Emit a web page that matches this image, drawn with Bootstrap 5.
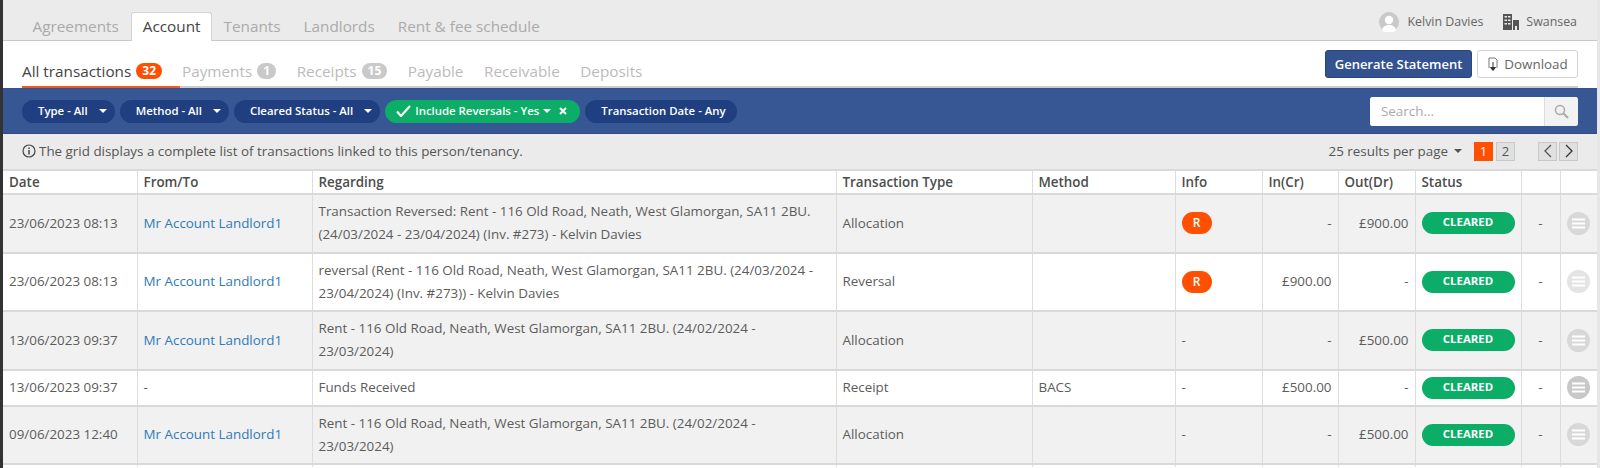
<!DOCTYPE html>
<html lang="en">
<head>
    <title>Account</title>
    <meta charset="UTF-8">
    <link href="https://cdn.jsdelivr.net/npm/bootstrap@5.3.0/dist/css/bootstrap.min.css" rel="stylesheet">
    <style>
        html, body { height: 468px; overflow: hidden; }
        body { font-family: "Open Sans", sans-serif; font-size: 13.4px; color: #555; background: #fff; border-left: 3px solid #333; border-right: 3px solid #e6e6e6; }
        .top-bar { height: 41px; background: #ebebeb; border-bottom: 1px solid #c9c9c9; padding-left: 17px; padding-right: 20px; }
        .top-tab { display: block; height: 28px; padding: 0 11.5px; font-size: 15.3px; line-height: 27px; color: #aaa; text-decoration: none; border-top: 1px solid transparent; }
        .top-tab.first-tab { padding: 0 12.5px; }
        .top-tab.active-tab { background: #fff; color: #444; border: 1px solid #d4d4d4; border-bottom: 0; border-radius: 3px 3px 0 0; height: 29px; margin-bottom: -1px; padding: 0 10.5px; }
        .user-info { font-size: 12.4px; color: #666; }
        .user-sep { margin-left: 20px; margin-right: 7px; }
        .sub-bar { height: 47px; padding: 0 19px; }
        .sub-tabs { height: 47px; border-bottom: 2px solid #ccc; flex: 1; }
        .sub-tab { color: #bbb; font-size: 15.3px; text-decoration: none; height: 47px; padding-top: 20px; margin-right: 20.5px; display: flex; gap: 5px; line-height: 20px; }
        .sub-tab.active-sub { color: #444; border-bottom: 2px solid #f15a22; padding-right: 18px; margin-right: 2px; }
        .count-pill { min-width: 18px; height: 16px; margin-top: 2px; padding: 0 6px; border-radius: 9px; background: #c9c9c9; color: #fff; font-size: 12px; font-weight: 700; line-height: 16px; text-align: center; }
        .count-pill.hot { background: #ff4f00; }
        .actions-wrap { gap: 5px; margin-top: 9px; height: 28px; }
        .btn-generate { background: #34528f; border: 1px solid #2b4679; color: #fff; font-size: 13px; font-weight: 600; height: 28px; width: 147px; padding: 0; line-height: 25px; border-radius: 3px; }
        .btn-download { background: #fff; border: 1px solid #d4d4d4; color: #666; font-size: 13.4px; height: 28px; width: 101px; padding: 0; line-height: 25px; border-radius: 3px; display: flex; align-items: center; justify-content: center; gap: 5px; }
        .filter-bar { height: 46px; background: #365694; border-top: 1px solid #34528f; padding: 0 19px; border-bottom: 1px solid #2f4b80; }
        .filter-pills { gap: 5px; }
        .filter-pill { height: 23px; border-radius: 12px; background: #1f3f80; color: #fff; font-size: 11.4px; font-weight: 600; padding: 0 8px 0 16px; line-height: 22px; white-space: nowrap; display: flex; align-items: center; gap: 11px; border: 0; }
        .filter-pill.plain { padding-right: 11px; }
        .filter-pill.on { background: #0bad67; padding: 0 13px 0 11px; gap: 4px; }
        .caret-down { width: 0; height: 0; border-left: 4px solid transparent; border-right: 4px solid transparent; border-top: 4px solid #fff; }
        .caret-down.caret-dark { border-top-color: #555; margin: 0 12px 0 6px; }
        .search-box { width: 208px; height: 29px; border-radius: 3px; overflow: hidden; background: #fff; }
        .search-box input { flex: 1; min-width: 0; border: 0; font-size: 13.4px; padding: 0 11px; outline: 0; color: #555; }
        .search-box input::placeholder { color: #aaa; }
        .search-btn { width: 34px; background: #f2f2f2; border-left: 1px solid #ddd; display: flex; align-items: center; justify-content: center; }
        .info-bar { height: 35px; background: #ebebeb; padding: 0 19px; color: #555; }
        .info-note { gap: 3px; }
        .page-box { width: 19px; height: 19px; line-height: 17px; text-align: center; font-size: 13px; background: #e0e0e0; border: 1px solid #c8c8c8; color: #555; display: flex; align-items: center; justify-content: center; }
        .page-box.current { background: #ff4f00; border-color: #ff4f00; color: #fff; }
        .page-two { margin-left: 3px; margin-right: 23px; }
        .page-prev { margin-right: 2px; }
        .grid-table { table-layout: fixed; width: 1594px; margin: 0; font-size: 13.4px; color: #5c5c5c; border-top: 2px solid #d9d9d9; }
        .grid-table th { height: 24px; padding: 0 0 0 6px; font-weight: 600; color: #4d4d4d; border-right: 1px solid #ddd; border-bottom: 2px solid #d9d9d9; vertical-align: middle; }
        .grid-table td { padding: 0 6px; line-height: 23px; vertical-align: middle; border-right: 1px solid #ddd; border-bottom: 2px solid #d9d9d9; color: #5c5c5c; }
        .grid-table tr.tall td { height: 58.5px; }
        .grid-table tr.short td { height: 36px; }
        .grid-table tr.tail td { height: 3px; line-height: 0; border-bottom: 0; }
        .grid-table tbody tr:nth-child(odd) td { background: #f1f1f1; }
        .grid-table tbody tr.tail td { background: #fff; }
        .grid-table td.regarding { padding-right: 16px; }
        .grid-table a { color: #2f7ab8; text-decoration: none; }
        .grid-table th:last-child, .grid-table td:last-child { border-right: 0; }
        .c-date { width: 134px; } .c-from { width: 175px; } .c-reg { width: 524px; } .c-type { width: 196px; }
        .c-method { width: 143px; } .c-info { width: 87px; } .c-in { width: 76px; } .c-out { width: 77px; }
        .c-status { width: 106px; } .c-dash { width: 39px; } .c-menu { width: 37px; }
        .r-chip { display: block; width: 30px; height: 22px; border-radius: 11px; background: #ff4f00; color: #fff; font-size: 12px; font-weight: 600; line-height: 21px; text-align: center; }
        .status-chip { display: block; width: 93px; height: 22px; border-radius: 11px; background: #0bad67; color: #fff; font-size: 11.4px; font-weight: 700; line-height: 20px; text-align: center; }
        .menu-dot { display: flex; width: 23px; height: 23px; border-radius: 50%; background: #d8d8d8; align-items: center; justify-content: center; }
        .dot-pale .menu-dot { background: #e4e4e4; }
        .dot-dark .menu-dot { background: #c8c8c8; }
    </style>
</head>
<body>
<div class="top-bar d-flex align-items-end justify-content-between">
    <div class="d-flex">
        <a class="top-tab first-tab" href="#">Agreements</a>
        <a class="top-tab active-tab" href="#">Account</a>
        <a class="top-tab" href="#">Tenants</a>
        <a class="top-tab" href="#">Landlords</a>
        <a class="top-tab" href="#">Rent &amp; fee schedule</a>
    </div>
    <div class="user-info d-flex align-items-center align-self-center mt-1">
        <svg width="20" height="20" viewBox="0 0 20 20" class="me-2"><circle cx="10" cy="10" r="10" fill="#c9c9c9"/><circle cx="10" cy="8" r="4.2" fill="#fff"/><path d="M3 18c1-4 4-5 7-5s6 1 7 5a10 10 0 0 1-14 0z" fill="#fff"/></svg>
        <span>Kelvin Davies</span>
        <svg width="16" height="16" viewBox="0 0 16 16" class="user-sep"><path d="M0 0h9v16H0zM10 6h6v10h-2v-4h-2v4h-2z" fill="#555"/><path d="M1.500 2h2.500v1.500H1.500zM5 2h2.500v1.500H5zM1.500 5.500h2.500V7H1.500zM5 5.500h2.500V7H5zM1.500 9h2.500v1.500H1.500zM5 9h2.500v1.500H5z" fill="#ebebeb"/></svg>
        <span>Swansea</span>
    </div>
</div>
<div class="sub-bar d-flex">
    <div class="sub-tabs d-flex">
        <a class="sub-tab active-sub" href="#">All transactions <span class="count-pill hot">32</span></a>
        <a class="sub-tab" href="#">Payments <span class="count-pill">1</span></a>
        <a class="sub-tab" href="#">Receipts <span class="count-pill">15</span></a>
        <a class="sub-tab" href="#">Payable</a>
        <a class="sub-tab" href="#">Receivable</a>
        <a class="sub-tab" href="#">Deposits</a>
        <div class="actions-wrap d-flex ms-auto">
            <button class="btn-generate" type="button">Generate Statement</button>
            <button class="btn-download" type="button">
                <svg width="12" height="15" viewBox="0 0 12 15"><path d="M2 11V1h6l2 2v8" fill="none" stroke="#777"/><path d="M6 5v8M3.500 10.500 6 13.500l2.500-3z" fill="#333" stroke="#333"/></svg>
                Download
            </button>
        </div>
    </div>
</div>
<div class="filter-bar d-flex align-items-center justify-content-between">
    <div class="filter-pills d-flex">
        <button class="filter-pill" type="button">Type - All <span class="caret-down"></span></button>
        <button class="filter-pill" type="button">Method - All <span class="caret-down"></span></button>
        <button class="filter-pill" type="button">Cleared Status - All <span class="caret-down"></span></button>
        <button class="filter-pill on" type="button">
            <svg width="15" height="12" viewBox="0 0 15 12"><path d="M1 6.500l4 4.500L14 1" fill="none" stroke="#fff" stroke-width="2.200"/></svg>
            Include Reversals - Yes <span class="caret-down"></span>
            <svg width="8" height="8" viewBox="0 0 8 8" class="ms-1"><path d="M1 1l6 6M7 1 1 7" stroke="#fff" stroke-width="2"/></svg>
        </button>
        <button class="filter-pill plain" type="button">Transaction Date - Any</button>
    </div>
    <div class="search-box d-flex">
        <input type="text" placeholder="Search...">
        <span class="search-btn">
            <svg width="15" height="15" viewBox="0 0 15 15"><circle cx="6" cy="6" r="4.500" fill="none" stroke="#aaa" stroke-width="1.500"/><path d="M9.500 9.500 14 14" stroke="#aaa" stroke-width="2"/></svg>
        </span>
    </div>
</div>
<div class="info-bar d-flex align-items-center justify-content-between">
    <div class="info-note d-flex align-items-center">
        <svg width="14" height="14" viewBox="0 0 14 14"><circle cx="7" cy="7" r="6" fill="none" stroke="#444" stroke-width="1.200"/><path d="M7 6v4.500M7 3.500v1.500" stroke="#444" stroke-width="1.500"/></svg>
        <span>The grid displays a complete list of transactions linked to this person/tenancy.</span>
    </div>
    <div class="d-flex align-items-center">
        <span>25 results per page</span>
        <span class="caret-down caret-dark"></span>
        <span class="page-box current">1</span>
        <span class="page-box page-two">2</span>
        <span class="page-box page-prev"><svg width="10" height="14" viewBox="0 0 10 14"><path d="M8 1 2 7l6 6" fill="none" stroke="#555" stroke-width="1.300"/></svg></span>
        <span class="page-box"><svg width="10" height="14" viewBox="0 0 10 14"><path d="m2 1 6 6-6 6" fill="none" stroke="#333" stroke-width="1.300"/></svg></span>
    </div>
</div>
<table class="grid-table">
    <colgroup>
        <col class="c-date"><col class="c-from"><col class="c-reg"><col class="c-type"><col class="c-method"><col class="c-info"><col class="c-in"><col class="c-out"><col class="c-status"><col class="c-dash"><col class="c-menu">
    </colgroup>
    <thead>
    <tr><th>Date</th><th>From/To</th><th>Regarding</th><th>Transaction Type</th><th>Method</th><th>Info</th><th>In(Cr)</th><th>Out(Dr)</th><th>Status</th><th></th><th></th></tr>
    </thead>
    <tbody id="rows"></tbody>
</table>
<script>
    const menuIcon = '<span class="menu-dot"><svg width="13" height="11" viewBox="0 0 13 11"><path d="M0 1.500h13M0 5.500h13M0 9.500h13" stroke="#fff" stroke-width="1.800"/></svg></span>';
    const rows = [
        ['tall', '23/06/2023 08:13', 1, 'Transaction Reversed: Rent - 116 Old Road, Neath, West Glamorgan, SA11 2BU. (24/03/2024 - 23/04/2024) (Inv. #273) - Kelvin Davies', 'Allocation', '', 1, '-', '£900.00', ''],
        ['tall', '23/06/2023 08:13', 1, 'reversal (Rent - 116 Old Road, Neath, West Glamorgan, SA11 2BU. (24/03/2024 - 23/04/2024) (Inv. #273)) - Kelvin Davies', 'Reversal', '', 1, '£900.00', '-', 'dot-pale'],
        ['tall', '13/06/2023 09:37', 1, 'Rent - 116 Old Road, Neath, West Glamorgan, SA11 2BU. (24/02/2024 - 23/03/2024)', 'Allocation', '', 0, '-', '£500.00', ''],
        ['short', '13/06/2023 09:37', 0, 'Funds Received', 'Receipt', 'BACS', 0, '£500.00', '-', 'dot-dark'],
        ['tall', '09/06/2023 12:40', 1, 'Rent - 116 Old Road, Neath, West Glamorgan, SA11 2BU. (24/02/2024 - 23/03/2024)', 'Allocation', '', 0, '-', '£500.00', '']
    ];
    document.getElementById('rows').innerHTML = rows.map(r => `
        <tr class="${r[0]} ${r[9]}">
            <td>${r[1]}</td>
            <td>${r[2] ? '<a href="#">Mr Account Landlord1</a>' : '-'}</td>
            <td class="regarding">${r[3]}</td>
            <td>${r[4]}</td>
            <td>${r[5]}</td>
            <td>${r[6] ? '<span class="r-chip">R</span>' : '-'}</td>
            <td class="text-end">${r[7]}</td>
            <td class="text-end">${r[8]}</td>
            <td><span class="status-chip">CLEARED</span></td>
            <td class="text-center">-</td>
            <td>${menuIcon}</td>
        </tr>`).join('') + '<tr class="tail">' + '<td></td>'.repeat(11) + '</tr>';
</script>
<script src="https://cdn.jsdelivr.net/npm/bootstrap@5.3.0/dist/js/bootstrap.bundle.min.js"></script>
</body>
</html>
